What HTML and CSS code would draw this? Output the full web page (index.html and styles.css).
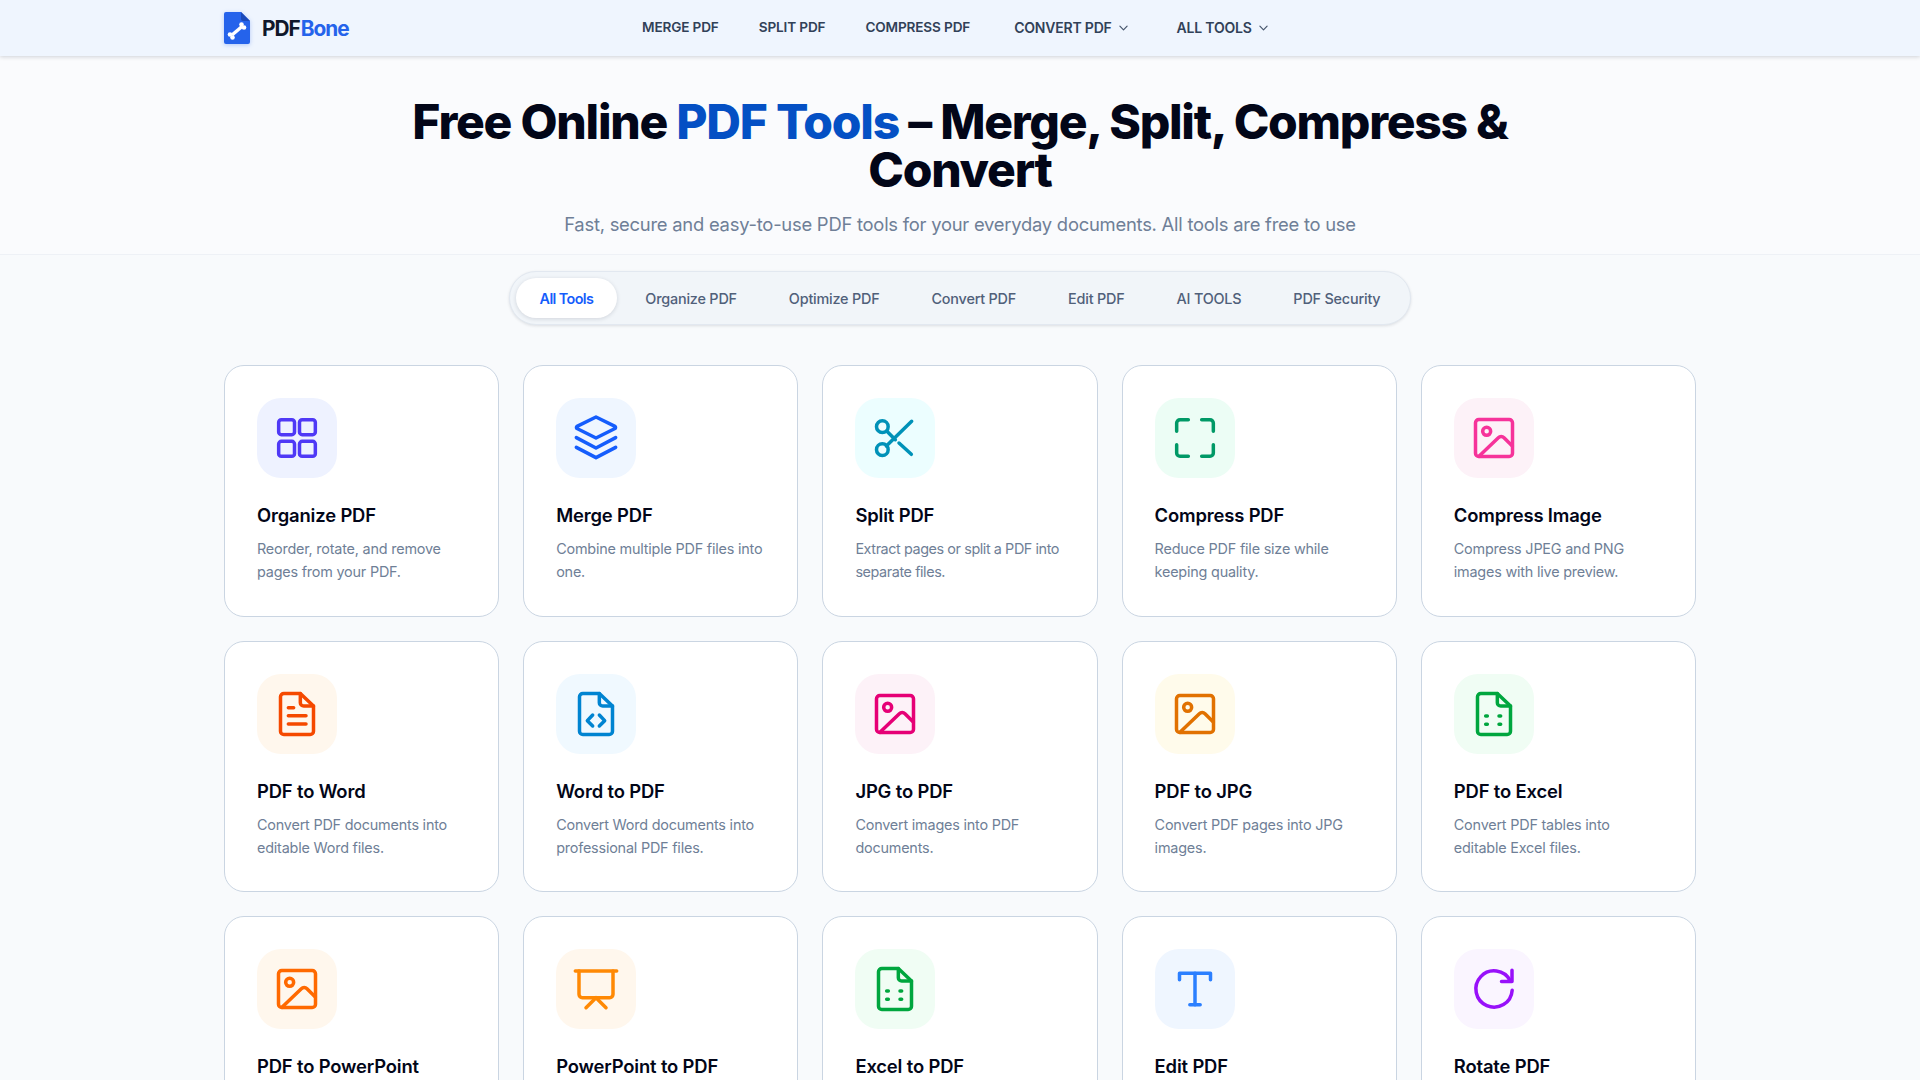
FILE: index.html
```html
<!DOCTYPE html>
<html lang="en">
<head>
<meta charset="utf-8">
<title>PDFBone – Free Online PDF Tools</title>
<link rel="stylesheet" href="styles.css">
</head>
<body>
<svg class="defs" width="0" height="0" aria-hidden="true">
  <symbol id="i-image" viewBox="0 0 24 24" overflow="visible">
    <rect x="0.9" y="0.9" width="22.2" height="22.2" rx="2"/>
    <circle cx="7.6" cy="8" r="2.4"/>
    <path d="M3 23 14.6 11.8a2.4 2.4 0 0 1 3.4 0L23 16.8"/>
  </symbol>
  <symbol id="i-doc" viewBox="0 0 24 24" overflow="visible">
    <path d="M14 -.3H4.1a2 2 0 0 0-2 2V22.3a2 2 0 0 0 2 2H19.9a2 2 0 0 0 2-2V7.2L14 -.3Z"/>
    <path d="M14 -.3V5.2a2 2 0 0 0 2 2h5.9"/>
  </symbol>
</svg>

<header class="topbar">
  <div class="topbar-inner">
    <a class="logo" href="#">
      <svg class="logo-mark" viewBox="0 0 26 32" width="26" height="32">
        <path class="logo-sheet" d="M2 0H17L26 9V30a2 2 0 0 1-2 2H2a2 2 0 0 1-2-2V2a2 2 0 0 1 2-2Z"/>
        <path class="logo-fold" d="M17 0 26 9H19a2 2 0 0 1-2-2Z"/>
        <path class="logo-bone" d="M8 23 18 14.500"/>
        <circle class="logo-knob" cx="6" cy="22.500" r="2.300"/><circle class="logo-knob" cx="8.500" cy="25.500" r="2.300"/>
        <circle class="logo-knob" cx="17.500" cy="12.500" r="2.300"/><circle class="logo-knob" cx="20" cy="15.500" r="2.300"/>
      </svg>
      <span class="logo-text">PDF<span class="logo-accent">Bone</span></span>
    </a>
    <nav class="nav">
      <a class="nav-link" href="#">MERGE PDF</a>
      <a class="nav-link" href="#">SPLIT PDF</a>
      <a class="nav-link" href="#">COMPRESS PDF</a>
      <a class="nav-link nav-drop nav-convert" href="#">CONVERT PDF <svg class="chev" viewBox="0 0 10 6" width="9" height="6"><path d="M1 1l4 4 4-4"/></svg></a>
      <a class="nav-link nav-drop nav-all" href="#">ALL TOOLS <svg class="chev" viewBox="0 0 10 6" width="9" height="6"><path d="M1 1l4 4 4-4"/></svg></a>
    </nav>
  </div>
</header>

<main>
  <section class="hero">
    <h1 class="hero-title">Free Online <span class="hero-accent">PDF Tools</span> – Merge, Split, Compress &amp; Convert</h1>
    <p class="hero-sub">Fast, secure and easy-to-use PDF tools for your everyday documents. All tools are free to use</p>
  </section>

  <div class="tabs-row">
    <div class="tabs">
      <button class="tab tab-active">All Tools</button>
      <button class="tab">Organize PDF</button>
      <button class="tab">Optimize PDF</button>
      <button class="tab">Convert PDF</button>
      <button class="tab">Edit PDF</button>
      <button class="tab">AI TOOLS</button>
      <button class="tab">PDF Security</button>
    </div>
  </div>

  <section class="grid">
    <article class="card">
      <div class="icon c-indigo"><svg viewBox="0 0 24 24"><rect x="1" y="1" width="9.500" height="9" rx="1.600"/><rect x="13.500" y="1" width="9.500" height="9" rx="1.600"/><rect x="1" y="14" width="9.500" height="9" rx="1.600"/><rect x="13.500" y="14" width="9.500" height="9" rx="1.600"/></svg></div>
      <h2 class="card-title">Organize PDF</h2>
      <p class="card-desc">Reorder, rotate, and remove pages from your PDF.</p>
    </article>
    <article class="card">
      <div class="icon c-blue"><svg viewBox="0 0 24 24"><path d="M12 -.6 23.400 5 a.8.8 0 0 1 0 1.300L12 12 .6 6.300a.8.8 0 0 1 0-1.300Z"/><path d="M.2 11.800 12 18 23.800 11.800"/><path d="M.2 17.600 12 23.800 23.800 17.600"/></svg></div>
      <h2 class="card-title">Merge PDF</h2>
      <p class="card-desc">Combine multiple PDF files into one.</p>
    </article>
    <article class="card">
      <div class="icon c-cyan"><svg viewBox="0 0 24 24"><circle cx="4.400" cy="5.200" r="3.500"/><circle cx="4.400" cy="19" r="3.500"/><path d="M6.800 16.800 22 2"/><path d="M7 7.800 12.200 13"/><path d="M14.400 15 21.800 21.800"/></svg></div>
      <h2 class="card-title">Split PDF</h2>
      <p class="card-desc card-desc-tight">Extract pages or split a PDF into separate files.</p>
    </article>
    <article class="card">
      <div class="icon c-emerald"><svg viewBox="0 0 24 24"><path d="M1 8V3a2 2 0 0 1 2-2h5"/><path d="M16 1h5a2 2 0 0 1 2 2v5"/><path d="M23 16v5a2 2 0 0 1-2 2h-5"/><path d="M8 23H3a2 2 0 0 1-2-2v-5"/></svg></div>
      <h2 class="card-title">Compress PDF</h2>
      <p class="card-desc">Reduce PDF file size while keeping quality.</p>
    </article>
    <article class="card">
      <div class="icon c-pink5"><svg viewBox="0 0 24 24"><use href="#i-image"/></svg></div>
      <h2 class="card-title">Compress Image</h2>
      <p class="card-desc">Compress JPEG and PNG images with live preview.</p>
    </article>

    <article class="card">
      <div class="icon c-orange6"><svg viewBox="0 0 24 24"><use href="#i-doc"/><path d="M6.800 8.200H10M6.800 13H17.400M6.800 18H17.400"/></svg></div>
      <h2 class="card-title">PDF to Word</h2>
      <p class="card-desc">Convert PDF documents into editable Word files.</p>
    </article>
    <article class="card">
      <div class="icon c-sky"><svg viewBox="0 0 24 24"><use href="#i-doc"/><path d="M10 12.600 6.800 16 10 19.200M14 12.600 17.200 16 14 19.200"/></svg></div>
      <h2 class="card-title">Word to PDF</h2>
      <p class="card-desc">Convert Word documents into professional PDF files.</p>
    </article>
    <article class="card">
      <div class="icon c-pink6"><svg viewBox="0 0 24 24"><use href="#i-image"/></svg></div>
      <h2 class="card-title">JPG to PDF</h2>
      <p class="card-desc">Convert images into PDF documents.</p>
    </article>
    <article class="card">
      <div class="icon c-amber"><svg viewBox="0 0 24 24"><use href="#i-image"/></svg></div>
      <h2 class="card-title">PDF to JPG</h2>
      <p class="card-desc">Convert PDF pages into JPG images.</p>
    </article>
    <article class="card">
      <div class="icon c-green"><svg viewBox="0 0 24 24"><use href="#i-doc"/><path d="M7 13.200H8M15 13.200H16M7 18.200H8M15 18.200H16"/></svg></div>
      <h2 class="card-title">PDF to Excel</h2>
      <p class="card-desc">Convert PDF tables into editable Excel files.</p>
    </article>

    <article class="card">
      <div class="icon c-orange5"><svg viewBox="0 0 24 24"><use href="#i-image"/></svg></div>
      <h2 class="card-title">PDF to PowerPoint</h2>
      <p class="card-desc">Convert PDF files into editable PowerPoint slides.</p>
    </article>
    <article class="card">
      <div class="icon c-orange4"><svg viewBox="0 0 24 24"><path d="M-.4 1.200H24.400"/><path d="M1.800 1.200V15.200a2 2 0 0 0 2 2H20.200a2 2 0 0 0 2-2V1.200"/><path d="M12 17.200 6 23.200M12 17.200 18 23.200"/></svg></div>
      <h2 class="card-title">PowerPoint to PDF</h2>
      <p class="card-desc">Turn PowerPoint slides into PDF documents.</p>
    </article>
    <article class="card">
      <div class="icon c-green"><svg viewBox="0 0 24 24"><use href="#i-doc"/><path d="M7 13.200H8M15 13.200H16M7 18.200H8M15 18.200H16"/></svg></div>
      <h2 class="card-title">Excel to PDF</h2>
      <p class="card-desc">Convert Excel sheets into PDF documents.</p>
    </article>
    <article class="card">
      <div class="icon c-blue5"><svg viewBox="0 0 24 24"><path d="M2.700 6.400V2.500H21.300V6.400"/><path d="M12 2.500V21.400"/><path d="M8.900 21.400H15.100"/></svg></div>
      <h2 class="card-title">Edit PDF</h2>
      <p class="card-desc">Add text and shapes to your PDF files.</p>
    </article>
    <article class="card">
      <div class="icon c-purple"><svg viewBox="0 0 24 24"><path d="M21.700 7A10.900 10.900 0 1 0 22.900 12.800"/><path d="M22.800 .8V7.500H16.500"/></svg></div>
      <h2 class="card-title">Rotate PDF</h2>
      <p class="card-desc">Rotate the pages of your PDF document.</p>
    </article>
  </section>
</main>
</body>
</html>
```

FILE: styles.css
```css
* { box-sizing: border-box; }
html, body { height: 100%; overflow: hidden; }
body {
  margin: 0;
  background: #f8fafc;
  color: #020618;
  font-family: Inter, "Liberation Sans", sans-serif;
}
a { color: inherit; text-decoration: none; }
.defs { position: absolute; }

/* top bar */
.topbar {
  height: 56px;
  background: #eff5fe;
  box-shadow: 0 1px 4px rgba(15, 23, 43, .18);
  position: relative;
}
.topbar-inner {
  width: 1472px;
  height: 100%;
  margin: 0 auto;
  display: flex;
  align-items: center;
}
.logo {
  width: 418px;
  display: flex;
  align-items: center;
  gap: 12px;
}
.logo-mark { display: block; filter: drop-shadow(0 1px 2px rgba(37, 99, 235, .3)); }
.logo-sheet { fill: #2563eb; }
.logo-fold { fill: #1b49b8; }
.logo-bone { stroke: #fff; stroke-width: 3.4; fill: none; }
.logo-knob { fill: #fff; }
.logo-text {
  font-size: 20.800px;
  font-weight: 700;
  letter-spacing: -1px;
  color: #0f172b;
}
.logo-accent { color: #2563eb; margin-left: 1px; }

.nav { display: flex; align-items: center; gap: 40px; padding-bottom: 2px; }
.nav-link {
  font-size: 13.600px;
  font-weight: 600;
  letter-spacing: -.15px;
  color: #314158;
  line-height: 20px;
  white-space: nowrap;
}
.nav-drop {
  position: relative;
  top: 1px;
  display: flex;
  align-items: center;
  gap: 7px;
  font-size: 14px;
  letter-spacing: -.2px;
}
.nav-convert { margin-left: 4px; }
.nav-all { margin-left: 9px; }
.chev { fill: none; stroke: #45556c; stroke-width: 1.300; stroke-linecap: round; stroke-linejoin: round; }

/* hero */
.hero {
  padding: 42px 0 15px;
  text-align: center;
  background: #fafbfd;
  border-bottom: 1px solid #eef1f6;
}
.hero-title {
  width: 1200px;
  margin: 0 auto;
  font-size: 48px;
  line-height: 48px;
  font-weight: 800;
  letter-spacing: -1.250px;
  color: #020618;
}
.hero-accent { color: #0450c4; }
.hero-sub {
  margin: 15px 0 0;
  font-size: 18.400px;
  line-height: 30px;
  color: #6f7f97;
  letter-spacing: -.24px;
}

/* tabs */
.tabs-row { display: flex; justify-content: center; padding-top: 16px; }
.tabs {
  display: flex;
  gap: 4px;
  padding: 6px;
  height: 54px;
  background: #f1f5f9;
  border: 1px solid #e2e8f0;
  border-radius: 27px;
  box-shadow: 0 1px 3px rgba(15, 23, 43, .12);
}
.tab {
  height: 40px;
  padding: 0 24px;
  border: 0;
  border-radius: 20px;
  background: transparent;
  color: #50607a;
  font: 500 14.400px Inter, "Liberation Sans", sans-serif;
  letter-spacing: -.2px;
  white-space: nowrap;
}
.tab-active {
  background: #fff;
  color: #155dfc;
  font-weight: 600;
  letter-spacing: -.6px;
  box-shadow: 0 1px 4px rgba(15, 23, 43, .14);
}

/* cards */
.grid {
  width: 1472px;
  margin: 40px auto 0;
  display: grid;
  grid-template-columns: repeat(5, 1fr);
  gap: 24px;
}
.card {
  height: 251.500px;
  padding: 32px;
  background: #fff;
  border: 1px solid #cad5e2;
  border-radius: 20px;
}
.icon {
  width: 80px;
  height: 80px;
  border-radius: 24px;
  display: flex;
  align-items: center;
  justify-content: center;
}
.icon svg {
  width: 40px;
  height: 40px;
  overflow: visible;
  fill: none;
  stroke: currentColor;
  stroke-width: 2.100;
  stroke-linecap: round;
  stroke-linejoin: round;
}
.card-title {
  margin: 24px 0 8px;
  font-size: 18.400px;
  line-height: 27px;
  font-weight: 600;
  letter-spacing: -.15px;
  color: #020618;
}
.card-desc {
  margin: 0;
  font-size: 14.400px;
  line-height: 23px;
  color: #6f7f97;
  letter-spacing: -.2px;
}
.card-desc-tight { letter-spacing: -.42px; }

.c-indigo { color: #4f39f6; background: #eef2ff; }
.c-blue { color: #155dfc; background: #eff6ff; }
.c-cyan { color: #0092b8; background: #ecfeff; }
.c-emerald { color: #009966; background: #ecfdf5; }
.c-pink5 { color: #f6339a; background: #fdf2f8; }
.c-orange6 { color: #f54900; background: #fff7ed; }
.c-sky { color: #0084d1; background: #f0f9ff; }
.c-pink6 { color: #e60076; background: #fdf2f8; }
.c-amber { color: #e17100; background: #fffbeb; }
.c-green { color: #00a63e; background: #f0fdf4; }
.c-orange5 { color: #ff6900; background: #fff7ed; }
.c-orange4 { color: #ff8904; background: #fff7ed; }
.c-blue5 { color: #2b7fff; background: #eff6ff; }
.c-purple { color: #9810fa; background: #faf5ff; }
```
